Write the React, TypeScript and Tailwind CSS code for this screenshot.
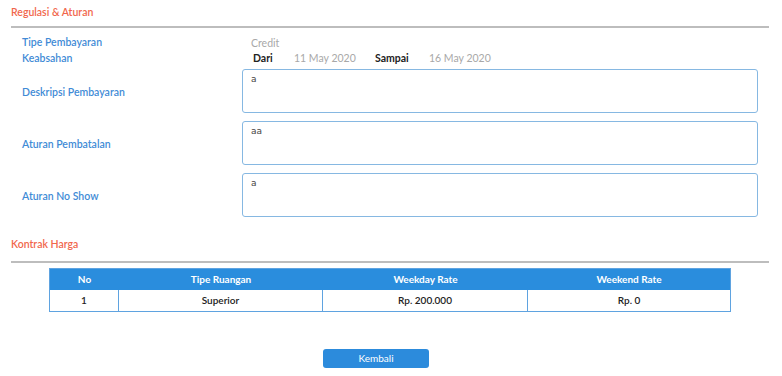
import React from "react";

const Row = ({ label, children, className = "", labelClass = "" }: { label: string; children: React.ReactNode; className?: string; labelClass?: string }) => (
  <div className={`flex items-center pl-[22px] pr-[24px] ${className}`}>
    <div className={`w-[220px] shrink-0 text-[10.5px] font-semibold text-[#3f8bd6] ${labelClass}`}>{label}</div>
    <div className="flex-1">{children}</div>
  </div>
);

const Area = ({ text }: { text: string }) => (
  <div className="h-[44px] rounded-[3px] border border-[#86b8e2] px-[8px] pt-[3px] text-[9px] leading-[12px] text-[#444] font-['DejaVu_Sans',sans-serif]">
    {text}
  </div>
);

export default function App() {
  const cols = ["w-[69px]", "w-[204px]", "w-[205px]", "flex-1"];
  return (
    <div className="w-[782px] h-[376px] bg-white font-['Lato',sans-serif] overflow-hidden">
      <div className="pl-[11px] pt-[4px] h-[20px] leading-[16px] text-[10.5px] font-semibold text-[#f1674c]">Regulasi &amp; Aturan</div>
      <div className="ml-[11px] mr-[13px] mt-[6px] h-[2px] bg-[#bdbdbd]" />
      <div className="mt-[6px]">
        <Row label="Tipe Pembayaran" className="h-[16px] leading-[16px]">
          <span className="pl-[9px] text-[10.5px] text-[#a8a8a8]">Credit</span>
        </Row>
        <Row label="Keabsahan" className="h-[16px] leading-[16px]">
          <div className="flex items-center pl-[11px] text-[10.5px]">
            <span className="w-[41px] font-bold text-[#222]">Dari</span>
            <span className="w-[81px] text-[#a8a8a8]">11 May 2020</span>
            <span className="w-[54px] font-bold text-[#222]">Sampai</span>
            <span className="text-[#a8a8a8]">16 May 2020</span>
          </div>
        </Row>
        <div className="mt-[3px] flex flex-col gap-[8px]">
          <Row label="Deskripsi Pembayaran" labelClass="pt-[4px]"><Area text="a" /></Row>
          <Row label="Aturan Pembatalan" labelClass="pt-[4px]"><Area text="aa" /></Row>
          <Row label="Aturan No Show" labelClass="pt-[4px]"><Area text="a" /></Row>
        </div>
      </div>
      <div className="pl-[11px] mt-[19px] h-[16px] leading-[16px] text-[10.5px] font-semibold text-[#f1674c]">Kontrak Harga</div>
      <div className="ml-[11px] mr-[13px] mt-[9px] h-[2px] bg-[#bdbdbd]" />
      <div className="ml-[49px] mt-[5px] w-[682px] border border-[#5fa3e0] text-[10px]">
        <div className="flex h-[21px] bg-[#2a8ddd] text-white font-bold items-center">
          {["No", "Tipe Ruangan", "Weekday Rate", "Weekend Rate"].map((h, i) => (
            <div key={h} className={`${cols[i]} text-center`}>{h}</div>
          ))}
        </div>
        <div className="flex h-[21px] text-[#222] font-semibold">
          {["1", "Superior", "Rp. 200.000", "Rp. 0"].map((c, i) => (
            <div key={c} className={`${cols[i]} flex items-center justify-center ${i < 3 ? "border-r border-[#5fa3e0]" : ""}`}>{c}</div>
          ))}
        </div>
      </div>
      <button className="ml-[323px] mt-[37px] block w-[106px] h-[19px] rounded-[3px] bg-[#2c8bdc] text-white text-[10px] leading-[19px] text-center">
        Kembali
      </button>
    </div>
  );
}
